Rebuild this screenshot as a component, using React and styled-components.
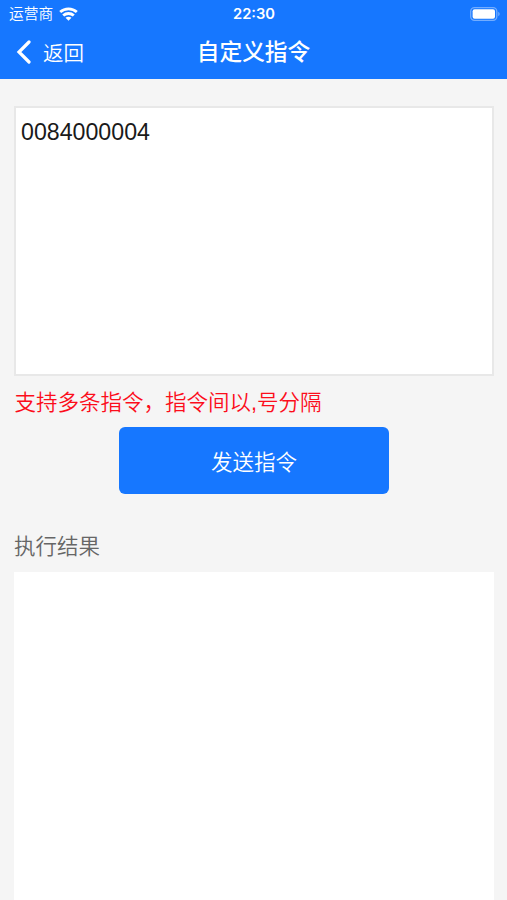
import React from "react";
import styled, { createGlobalStyle } from "styled-components";

export default function App() {
  return (
    <>
      <GlobalStyle />
      <Screen>
        <Header>
          <StatusBar>
            <Carrier>
              运营商
              <WifiIcon />
            </Carrier>
            <Clock>22:30</Clock>
            <BatteryIcon />
          </StatusBar>
          <NavBar>
            <BackButton type="button">
              <BackIcon />
              返回
            </BackButton>
            <Title>自定义指令</Title>
          </NavBar>
        </Header>
        <Content>
          <CommandInput defaultValue="0084000004" spellCheck={false} />
          <Hint>支持多条指令，指令间以,号分隔</Hint>
          <SendButton type="button">发送指令</SendButton>
          <ResultLabel>执行结果</ResultLabel>
          <ResultBox />
        </Content>
      </Screen>
    </>
  );
}

function WifiIcon() {
  return (
    <svg width="19" height="14" viewBox="0 0 19 14" fill="none" stroke="#fff" strokeWidth="2.8">
      <path d="M1.2 5C5.8.7 13.2.7 17.8 5" />
      <path d="M4.2 8.6c3-2.8 7.6-2.8 10.6 0" />
      <path d="M9.5 13.8 6.5 10.8c1.7-1.5 4.3-1.5 6 0z" fill="#fff" stroke="none" />
    </svg>
  );
}

function BatteryIcon() {
  return (
    <svg width="31" height="14" viewBox="0 0 31 14" fill="none">
      <rect x=".7" y=".7" width="26.1" height="12.6" rx="3.8" stroke="#fff" strokeOpacity=".4" strokeWidth="1.3" />
      <rect x="2.6" y="2.3" width="22.4" height="9.4" rx="2" fill="#fff" />
      <path d="M28.3 4.8c1.8.7 1.8 3.7 0 4.4z" fill="#fff" fillOpacity=".45" />
    </svg>
  );
}

function BackIcon() {
  return (
    <svg width="16" height="24" viewBox="0 0 16 24" fill="none" stroke="#fff" strokeWidth="3.2" strokeLinecap="round">
      <path d="M13 2 3 12l10 10" />
    </svg>
  );
}

const GlobalStyle = createGlobalStyle`
  body {
    margin: 0;
    background: #f5f5f5;
    font-family: "Liberation Sans", "Noto Sans CJK SC", sans-serif;
    font-weight: 350;
  }
  * {
    box-sizing: border-box;
  }
`;
const Screen = styled.div`
  display: flex;
  flex-direction: column;
  height: 900px;
  overflow: hidden;
`;
const Header = styled.header`
  flex: none;
  height: 79px;
  background: #1677ff;
  color: #fff;
`;
const StatusBar = styled.div`
  display: grid;
  grid-template-columns: 1fr auto 1fr;
  align-items: center;
  height: 27px;
  padding: 0 6px 0 9px;
  > :last-child {
    justify-self: end;
  }
`;
const Carrier = styled.div`
  display: flex;
  align-items: center;
  gap: 6px;
  font-size: 14.7px;
  line-height: 28px;
`;
const Clock = styled.div`
  margin-left: -2px;
  font: 600 14.7px/28px Inter, sans-serif;
`;
const NavBar = styled.nav`
  display: grid;
  grid-template-columns: 1fr auto 1fr;
  align-items: center;
  height: 50px;
  padding: 0 16px;
`;
const BackButton = styled.button`
  display: flex;
  align-items: center;
  gap: 11px;
  padding: 0;
  border: 0;
  background: none;
  color: inherit;
  font: inherit;
  font-size: 20.5px;
`;
const Title = styled.h1`
  margin: 0;
  font-size: 22.7px;
  font-weight: 500;
  line-height: 50px;
`;
const Content = styled.main`
  display: flex;
  flex: 1;
  flex-direction: column;
  padding: 27px 13px 0 14px;
`;
const CommandInput = styled.textarea`
  flex: none;
  height: 270px;
  padding: 11px 5px;
  border: 2px solid #e8e8e8;
  outline: 0;
  background: #fff;
  color: #1a1a1a;
  font: 23.2px/27px "Liberation Sans", sans-serif;
  resize: none;
`;
const Hint = styled.p`
  margin: 11px 0 8px;
  padding-left: 0.5px;
  color: #fc0d1b;
  font-size: 21.5px;
  line-height: 32px;
`;
const SendButton = styled.button`
  flex: none;
  align-self: center;
  width: 270px;
  height: 67px;
  border: 0;
  border-radius: 6px;
  background: #1677ff;
  color: #fff;
  font: inherit;
  font-size: 21.5px;
`;
const ResultLabel = styled.h2`
  margin: 37px 0 9px;
  color: #666;
  font-size: 21.5px;
  font-weight: inherit;
  line-height: 32px;
`;
const ResultBox = styled.div`
  flex: 1;
  background: #fff;
`;
